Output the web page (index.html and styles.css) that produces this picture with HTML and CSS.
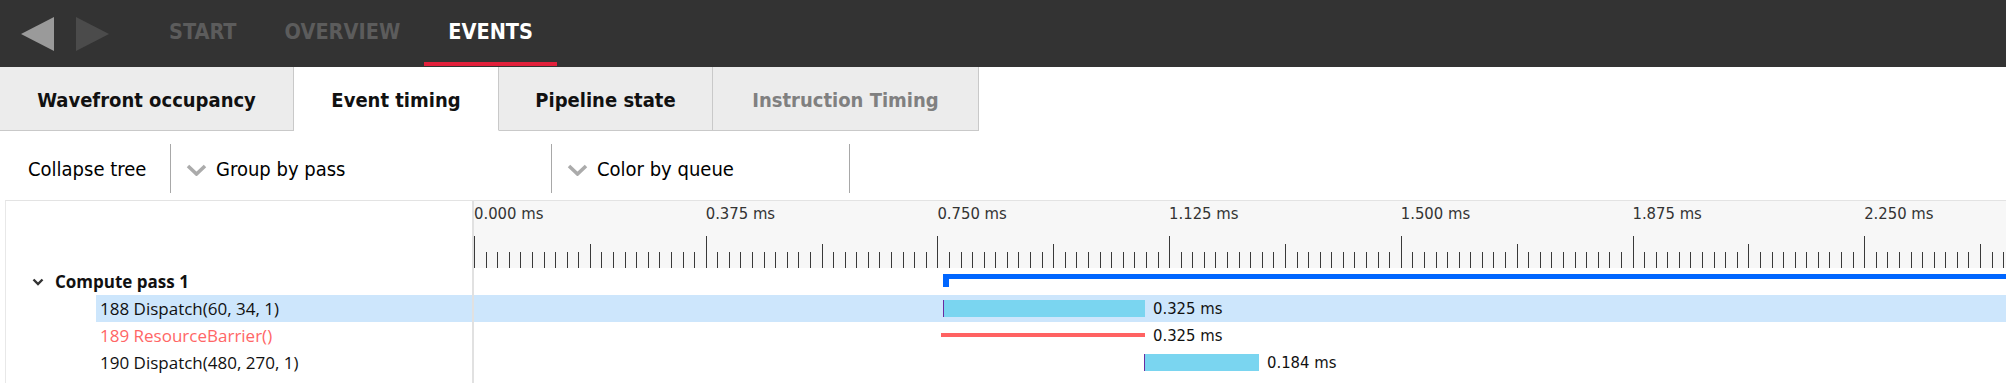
FILE: index.html
```html
<!DOCTYPE html>
<html>
<head>
<meta charset="utf-8">
<title>Event timing</title>
<link rel="stylesheet" href="styles.css">
</head>
<body>
<div class="app">
  <header class="topbar">
    <div class="arrows">
      <svg class="arrow back" width="34" height="34" viewBox="0 0 34 34"><polygon points="33,0 0,17 33,34"/></svg>
      <svg class="arrow fwd" width="34" height="34" viewBox="0 0 34 34"><polygon points="0,0 33,17 0,34"/></svg>
    </div>
    <nav class="nav">
      <a class="nav-item">START</a>
      <a class="nav-item">OVERVIEW</a>
      <a class="nav-item active">EVENTS</a>
    </nav>
  </header>

  <div class="tabs">
    <div class="tab tab-wave">Wavefront occupancy</div>
    <div class="tab tab-event active">Event timing</div>
    <div class="tab tab-pipe">Pipeline state</div>
    <div class="tab tab-instr disabled">Instruction Timing</div>
  </div>

  <div class="toolbar">
    <div class="tb-btn">Collapse tree</div>
    <div class="tb-sep"></div>
    <div class="tb-combo combo-pass">
      <svg class="combo-chev" width="21" height="12" viewBox="0 0 21 12"><polyline points="2,2 10.5,10 19,2"/></svg>
      <span>Group by pass</span>
    </div>
    <div class="tb-sep"></div>
    <div class="tb-combo combo-queue">
      <svg class="combo-chev" width="21" height="12" viewBox="0 0 21 12"><polyline points="2,2 10.5,10 19,2"/></svg>
      <span>Color by queue</span>
    </div>
    <div class="tb-sep"></div>
  </div>

  <div class="panel">
    <div class="row header">
      <div class="tree-cell"></div>
      <div class="track ruler">
        <div class="ruler-labels">
          <span>0.000 ms</span>
          <span>0.375 ms</span>
          <span>0.750 ms</span>
          <span>1.125 ms</span>
          <span>1.500 ms</span>
          <span>1.875 ms</span>
          <span>2.250 ms</span>
        </div>
        <svg class="ticks" width="1532" height="32" viewBox="0 0 1532 32">
          <defs>
            <g id="tg">
              <path d="M0.5 0V32M12.085 16V32M23.67 16V32M35.255 16V32M46.84 16V32M58.425 16V32M70.01 16V32M81.595 16V32M93.18 16V32M104.765 16V32M116.35 8V32M127.935 16V32M139.52 16V32M151.105 16V32M162.69 16V32M174.275 16V32M185.86 16V32M197.445 16V32M209.03 16V32M220.615 16V32"/>
            </g>
          </defs>
          <g class="tick-lines">
            <use href="#tg" x="0"/>
            <use href="#tg" x="231.7"/>
            <use href="#tg" x="463.4"/>
            <use href="#tg" x="695.1"/>
            <use href="#tg" x="926.8"/>
            <use href="#tg" x="1158.5"/>
            <use href="#tg" x="1390.2"/>
          </g>
        </svg>
      </div>
    </div>

    <div class="row">
      <div class="tree-cell indent1">
        <svg class="tree-chev" width="12" height="8" viewBox="0 0 12 8"><polyline points="1.5,1.5 6,6 10.5,1.5"/></svg>
        <span class="group-label">Compute pass 1</span>
      </div>
      <div class="track">
        <div class="pass-bar" style="margin-left:469px"></div>
      </div>
    </div>

    <div class="row selected">
      <div class="tree-cell indent2"><span class="item-label">188 Dispatch(60, 34, 1)</span></div>
      <div class="track">
        <div class="span-bar" style="margin-left:469px;width:202px"></div>
        <span class="dur">0.325 ms</span>
      </div>
    </div>

    <div class="row">
      <div class="tree-cell indent2"><span class="item-label barrier">189 ResourceBarrier()</span></div>
      <div class="track">
        <div class="barrier-bar" style="margin-left:467px;width:204px"></div>
        <span class="dur">0.325 ms</span>
      </div>
    </div>

    <div class="row">
      <div class="tree-cell indent2"><span class="item-label">190 Dispatch(480, 270, 1)</span></div>
      <div class="track">
        <div class="span-bar" style="margin-left:670px;width:115px"></div>
        <span class="dur">0.184 ms</span>
      </div>
    </div>

    <div class="row filler">
      <div class="tree-cell"></div>
      <div class="track"></div>
    </div>
  </div>
</div>
</body>
</html>
```

FILE: styles.css
```css
html, body {
  margin: 0;
  padding: 0;
  background: #ffffff;
}

body {
  width: 2006px;
  height: 383px;
  overflow: hidden;
}

.app {
  width: 2006px;
  height: 383px;
  overflow: hidden;
  font-family: "DejaVu Sans Condensed", "DejaVu Sans", sans-serif;
}

/* ---------- top bar ---------- */
.topbar {
  display: flex;
  align-items: center;
  height: 67px;
  box-sizing: border-box;
  padding-left: 21px;
  background: #333333;
}

.arrows {
  display: flex;
  gap: 21px;
}

.arrow {
  display: block;
}

.arrow.back polygon { fill: #9a9a9a; }
.arrow.fwd polygon { fill: #4b4b4b; }

.nav {
  display: flex;
  align-self: flex-start;
  margin-left: 35px;
}

.nav-item {
  display: flex;
  align-items: center;
  height: 66px;
  box-sizing: border-box;
  padding: 0 24px;
  border-bottom: 4px solid transparent;
  font-family: "DejaVu Sans Condensed", "DejaVu Sans", sans-serif;
  font-weight: bold;
  font-size: 21.5px;
  color: #5c5c5c;
}

.nav-item.active {
  color: #ffffff;
  border-bottom-color: #e2203b;
}

/* ---------- tabs ---------- */
.tabs {
  display: flex;
  height: 64px;
}

.tab {
  display: flex;
  align-items: center;
  justify-content: center;
  box-sizing: border-box;
  height: 64px;
  padding-top: 3px;
  background: #ececec;
  border-right: 1px solid #c9c9c9;
  border-bottom: 1px solid #c9c9c9;
  font-weight: bold;
  font-size: 20px;
  color: #111111;
}

.tab.active {
  background: #ffffff;
  border-bottom-color: #ffffff;
}

.tab.disabled {
  color: #808080;
}

.tab-wave { width: 294px; }
.tab-event { width: 205px; }
.tab-pipe { width: 214px; }
.tab-instr { width: 266px; }

/* ---------- toolbar ---------- */
.toolbar {
  display: flex;
  align-items: flex-start;
  height: 69px;
  font-size: 20px;
  color: #000000;
}

.tb-btn {
  width: 170px;
  box-sizing: border-box;
  padding-left: 28px;
  margin-top: 28px;
  line-height: 21px;
}

.tb-sep {
  width: 1px;
  height: 49px;
  margin-top: 13px;
  background: #a8a8a8;
}

.tb-combo {
  display: flex;
  align-items: center;
  gap: 9px;
  box-sizing: border-box;
  padding-left: 15px;
  margin-top: 28px;
  line-height: 21px;
}

.combo-pass { width: 380px; }
.combo-queue { width: 297px; }

.combo-chev {
  display: block;
}

.combo-chev polyline {
  fill: none;
  stroke: #ababab;
  stroke-width: 3.6;
}

/* ---------- timeline panel ---------- */
.panel {
  margin-left: 5px;
  border-top: 1px solid #e3e3e3;
  border-left: 1px solid #e8e8e8;
}

.row {
  display: flex;
  height: 27px;
}

.row.header {
  height: 67px;
}

.tree-cell {
  flex: none;
  display: flex;
  align-items: center;
  width: 466px;
  box-sizing: border-box;
  font-family: "Open Sans", "Noto Sans", sans-serif;
  font-size: 17px;
  color: #111111;
}

.tree-cell.indent1 {
  padding-left: 26px;
  gap: 11px;
}

.tree-cell.indent2 {
  padding-left: 90px;
}

.tree-chev {
  display: block;
}

.tree-chev polyline {
  fill: none;
  stroke: #333333;
  stroke-width: 2.4;
}

.group-label {
  font-weight: bold;
  line-height: 27px;
}

.item-label {
  flex: 1;
  align-self: stretch;
  padding-left: 4px;
  line-height: 27px;
  white-space: nowrap;
}

.item-label.barrier {
  color: #ff6666;
}

.row.selected .item-label,
.row.selected .track {
  background: #cde6fc;
}

.track {
  flex: 1;
  display: flex;
  align-items: flex-start;
  min-width: 0;
  overflow: hidden;
  border-left: 2px solid #e1e1e1;
}

.row.filler {
  height: 40px;
}

/* ruler */
.ruler {
  flex-direction: column;
  background: #f7f7f7;
}

.ruler-labels {
  display: flex;
  padding-top: 3px;
  font-size: 16.5px;
  line-height: 20px;
  color: #333333;
  white-space: nowrap;
}

.ruler-labels span {
  flex: 0 0 231.7px;
}

.ticks {
  display: block;
  margin-top: auto;
  flex: none;
}

.tick-lines {
  stroke: #3a3a3a;
  stroke-width: 1;
  shape-rendering: crispEdges;
}

/* bars */
.pass-bar {
  position: relative;
  flex: 1;
  height: 5px;
  margin-top: 6px;
  background: #0066ff;
}

.pass-bar::before {
  content: "";
  position: absolute;
  left: 0;
  top: 0;
  width: 6px;
  height: 13px;
  background: #0066ff;
}

.span-bar {
  flex: none;
  height: 17px;
  margin-top: 5px;
  box-sizing: border-box;
  background: #7ad5f0;
  border-left: 1px solid #6a2ca0;
}

.barrier-bar {
  flex: none;
  height: 4px;
  margin-top: 11px;
  background: #ff6262;
}

.dur {
  flex: none;
  margin-left: 8px;
  font-size: 16.5px;
  line-height: 27px;
  color: #111111;
  white-space: nowrap;
}
```
